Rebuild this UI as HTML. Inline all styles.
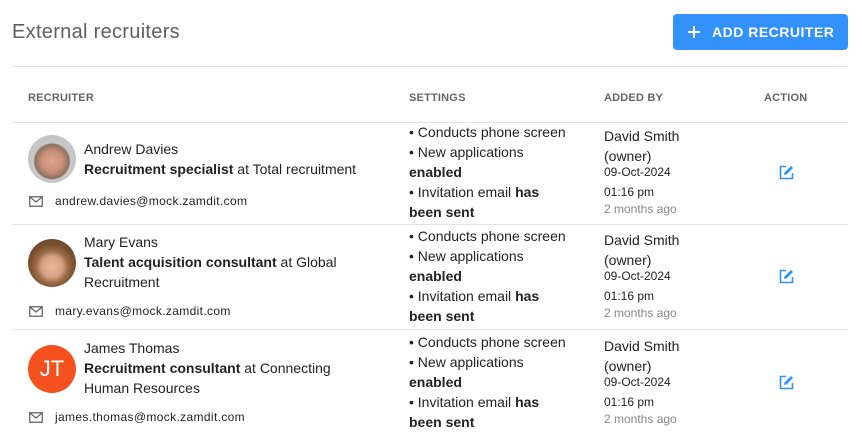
<!DOCTYPE html>
<html><head><meta charset="utf-8"><style>
*{margin:0;padding:0;box-sizing:border-box}
body{width:856px;height:438px;background:#fff;font-family:"Liberation Sans",Roboto,sans-serif;color:#222;position:relative;overflow:hidden}
.a{position:absolute;white-space:nowrap;line-height:20px;font-size:14px}
.s{font-size:12px}
.e{font-size:12px;letter-spacing:.35px}
.g{color:#888}
.h{font-size:11px;font-weight:bold;color:#666;letter-spacing:.2px}
.line{position:absolute;left:12px;width:836px;height:1px;background:#e3e3e3}
.av{position:absolute;left:28px;width:48px;height:48px;border-radius:50%}
b{font-weight:bold}
</style></head><body>
<div class="a" style="left:12px;top:20px;font-size:20px;line-height:24px;color:#5f5f5f;letter-spacing:.3px">External recruiters</div>
<div style="position:absolute;left:673px;top:14px;width:175px;height:36px;background:#3391fb;border-radius:4px;color:#fff;font-size:14px;font-weight:bold;letter-spacing:.5px;line-height:36px">
<svg style="position:absolute;left:15px;top:12px" width="12" height="12" viewBox="0 0 12 12"><path d="M6 0v12M0 6h12" stroke="#fff" stroke-width="2"/></svg>
<span style="position:absolute;left:39px">ADD RECRUITER</span></div>
<div class="line" style="top:66px"></div>
<div class="a h" style="left:28px;top:88px">RECRUITER</div>
<div class="a h" style="left:409px;top:88px">SETTINGS</div>
<div class="a h" style="left:604px;top:88px">ADDED BY</div>
<div class="a h" style="left:764px;top:88px">ACTION</div>
<div class="line" style="top:122px"></div>
<div class="line" style="top:224px"></div>
<div class="line" style="top:329px"></div>

<div class="av" style="top:135px;background:radial-gradient(circle at 50% 55%,#d9a58e 0,#c98f78 30%,#8a7060 48%,#c8c8c8 52%,#bdbdbd 100%)"></div>
<div class="a" style="left:84px;top:139px">Andrew Davies</div>
<div class="a" style="left:84px;top:159px"><b>Recruitment specialist</b> at Total recruitment</div>
<div class="av" style="top:239px;background:radial-gradient(circle at 50% 58%,#e6b79c 0,#d7a386 28%,#9a6a44 44%,#7a5232 60%,#5a3a22 100%)"></div>
<div class="a" style="left:84px;top:232px">Mary Evans</div>
<div class="a" style="left:84px;top:252px"><b>Talent acquisition consultant</b> at Global</div>
<div class="a" style="left:84px;top:272px">Recruitment</div>
<div class="av" style="top:345px;background:#f4511e;color:#fff;font-size:22px;line-height:48px;text-align:center">JT</div>
<div class="a" style="left:84px;top:338px">James Thomas</div>
<div class="a" style="left:84px;top:358px"><b>Recruitment consultant</b> at Connecting</div>
<div class="a" style="left:84px;top:378px">Human Resources</div>

<svg style="position:absolute;left:29px;top:196px" width="14" height="11" viewBox="0 0 14 11"><rect x=".75" y=".75" width="12.5" height="9.5" fill="none" stroke="#666" stroke-width="1.3"/><path d="M1 1l6 5 6-5" fill="none" stroke="#666" stroke-width="1.3"/></svg>
<div class="a e" style="left:55px;top:191px">andrew.davies@mock.zamdit.com</div>
<svg style="position:absolute;left:29px;top:306px" width="14" height="11" viewBox="0 0 14 11"><rect x=".75" y=".75" width="12.5" height="9.5" fill="none" stroke="#666" stroke-width="1.3"/><path d="M1 1l6 5 6-5" fill="none" stroke="#666" stroke-width="1.3"/></svg>
<div class="a e" style="left:55px;top:301px">mary.evans@mock.zamdit.com</div>
<svg style="position:absolute;left:29px;top:412px" width="14" height="11" viewBox="0 0 14 11"><rect x=".75" y=".75" width="12.5" height="9.5" fill="none" stroke="#666" stroke-width="1.3"/><path d="M1 1l6 5 6-5" fill="none" stroke="#666" stroke-width="1.3"/></svg>
<div class="a e" style="left:55px;top:407px">james.thomas@mock.zamdit.com</div>

<div class="a" style="left:409px;top:122px">• Conducts phone screen<br>• New applications<br><b>enabled</b><br>• Invitation email <b>has</b><br><b>been sent</b></div>
<div class="a" style="left:409px;top:226px">• Conducts phone screen<br>• New applications<br><b>enabled</b><br>• Invitation email <b>has</b><br><b>been sent</b></div>
<div class="a" style="left:409px;top:332px">• Conducts phone screen<br>• New applications<br><b>enabled</b><br>• Invitation email <b>has</b><br><b>been sent</b></div>

<div class="a" style="left:604px;top:126px">David Smith</div><div class="a" style="left:604px;top:146px">(owner)</div>
<div class="a s" style="left:604px;top:162px">09-Oct-2024</div><div class="a s" style="left:604px;top:182px">01:16 pm</div><div class="a s g" style="left:604px;top:199px">2 months ago</div>
<div class="a" style="left:604px;top:230px">David Smith</div><div class="a" style="left:604px;top:250px">(owner)</div>
<div class="a s" style="left:604px;top:266px">09-Oct-2024</div><div class="a s" style="left:604px;top:286px">01:16 pm</div><div class="a s g" style="left:604px;top:303px">2 months ago</div>
<div class="a" style="left:604px;top:336px">David Smith</div><div class="a" style="left:604px;top:356px">(owner)</div>
<div class="a s" style="left:604px;top:372px">09-Oct-2024</div><div class="a s" style="left:604px;top:392px">01:16 pm</div><div class="a s g" style="left:604px;top:409px">2 months ago</div>

<svg style="position:absolute;left:779px;top:165px" width="15" height="15" viewBox="0 0 15 15"><path d="M7 1.5H1.5v12h12V8" fill="none" stroke="#3391fb" stroke-width="1.6"/><path d="M5 10l.5-2.5L12 1l2 2-6.5 6.5z" fill="#3391fb"/></svg>
<svg style="position:absolute;left:779px;top:269px" width="15" height="15" viewBox="0 0 15 15"><path d="M7 1.5H1.5v12h12V8" fill="none" stroke="#3391fb" stroke-width="1.6"/><path d="M5 10l.5-2.5L12 1l2 2-6.5 6.5z" fill="#3391fb"/></svg>
<svg style="position:absolute;left:779px;top:375px" width="15" height="15" viewBox="0 0 15 15"><path d="M7 1.5H1.5v12h12V8" fill="none" stroke="#3391fb" stroke-width="1.6"/><path d="M5 10l.5-2.5L12 1l2 2-6.5 6.5z" fill="#3391fb"/></svg>
</body></html>
